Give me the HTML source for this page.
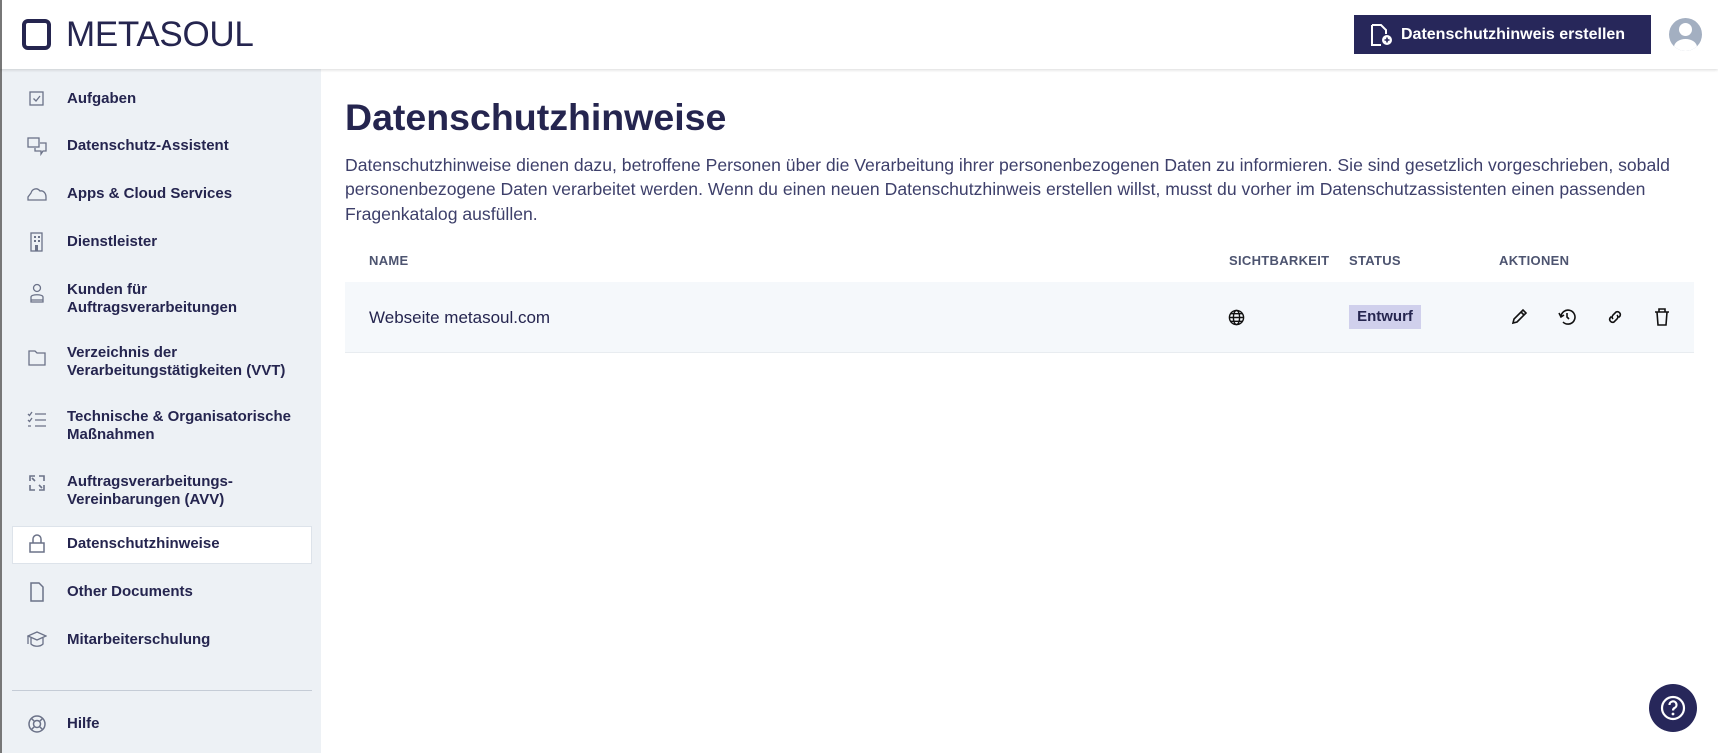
<!DOCTYPE html>
<html><head><meta charset="utf-8"><style>
*{margin:0;padding:0;box-sizing:border-box}
body{width:1718px;height:753px;overflow:hidden;background:#fff;font-family:"Liberation Sans",sans-serif;color:#25254f;position:relative}
.hdr{position:absolute;left:0;top:0;width:1718px;height:69px;background:#fff;box-shadow:0 1px 3px rgba(0,0,0,.15);z-index:2;border-left:2px solid #777}
.logo{position:absolute;left:20px;top:19px;width:29px;height:31px;border:4px solid #25254f;border-radius:6px}
.logotxt{position:absolute;left:64px;top:15px;font-size:35px;color:#25254f;letter-spacing:-0.3px}
.btn{position:absolute;left:1352px;top:15px;width:297px;height:39px;background:#27275a;color:#fff;font-weight:bold;font-size:16px;line-height:39px;padding-left:47px}
.btn svg{position:absolute;left:16px;top:9px}
.av{position:absolute;left:1667px;top:18px;width:33px;height:33px;border-radius:50%;background:#a3afc1;overflow:hidden}
.side{position:absolute;left:0;top:69px;width:321px;height:684px;background:#edf1f5;border-left:2px solid #777}
.it{position:absolute;left:65px;font-size:15px;font-weight:bold;line-height:17.5px;color:#25254f}
.ic{position:absolute;left:25px;width:20px;height:20px}
.act{position:absolute;left:10px;top:457px;width:300px;height:38px;background:#fff;border:1px solid #dde3ea}
.div{position:absolute;left:10px;top:621px;width:300px;height:1px;background:#c5ccd6}
h1{position:absolute;left:345px;top:96px;font-size:37.5px;font-weight:bold;color:#25254f}
.p{position:absolute;left:345px;top:153px;width:1660px;font-size:17.6px;line-height:24.3px;color:#3d3f6a;white-space:nowrap}
.th{position:absolute;top:253px;font-size:13px;font-weight:bold;color:#4d5470;letter-spacing:.3px}
.row{position:absolute;left:345px;top:282px;width:1349px;height:71px;background:#f5f8fb;border-bottom:1px solid #e8ecf0}
.badge{position:absolute;left:1349px;top:305px;width:72px;height:24px;background:#d0d0ec;font-weight:bold;font-size:15px;text-align:center;line-height:24px;color:#25254f}
.help{position:absolute;left:1649px;top:684px;width:48px;height:48px;border-radius:50%;background:#27275a}
</style></head><body>
<div class="hdr">
 <div class="logo"></div><div class="logotxt">METASOUL</div>
 <div class="btn"><svg width="24" height="22" viewBox="0 0 24 22"><path d="M2 1h9l5 5v4M2 1v20h9" fill="none" stroke="#fff" stroke-width="2"/><circle cx="17" cy="16" r="5" fill="#fff"/><path d="M17 13.5v5M14.5 16h5" stroke="#27275a" stroke-width="1.6"/></svg>Datenschutzhinweis erstellen</div>
 <div class="av"><div style="position:absolute;left:10px;top:5px;width:13px;height:13px;border-radius:50%;background:#fff"></div><div style="position:absolute;left:5px;top:21px;width:23px;height:16px;border-radius:50%;background:#fff"></div></div>
</div>
<div class="side">
 <div class="act"></div>
 <svg class="ic" style="top:20px" viewBox="0 0 20 20"><rect x="3" y="3" width="13" height="13" fill="none" stroke="#6b7288" stroke-width="1.3"/><path d="M6.5 9.5l2.5 2.5 4-5" fill="none" stroke="#6b7288" stroke-width="1.3"/></svg>
 <div class="it" style="top:21px">Aufgaben</div>
 <svg class="ic" style="top:67px" viewBox="0 0 20 20"><rect x="1" y="2" width="11" height="9" fill="none" stroke="#6b7288" stroke-width="1.3"/><path d="M13 7h6v8h-3l-2 3v-3H8v-3" fill="none" stroke="#6b7288" stroke-width="1.3"/></svg>
 <div class="it" style="top:68px">Datenschutz-Assistent</div>
 <svg class="ic" style="top:115px" viewBox="0 0 20 20"><path d="M1 16v-3l3-4c1-4 6-6 9-2 3-1 6 2 6 6v3z" fill="none" stroke="#6b7288" stroke-width="1.3"/></svg>
 <div class="it" style="top:116px">Apps &amp; Cloud Services</div>
 <svg class="ic" style="top:163px" viewBox="0 0 20 20"><rect x="4" y="1" width="11" height="18" fill="none" stroke="#6b7288" stroke-width="1.3"/><path d="M7 4h2v2H7zM11 4h2v2h-2zM7 8h2v2H7zM11 8h2v2h-2zM8 13h3v6H8z" fill="#6b7288"/></svg>
 <div class="it" style="top:164px">Dienstleister</div>
 <svg class="ic" style="top:214px" viewBox="0 0 20 20"><circle cx="10" cy="5" r="3.5" fill="none" stroke="#6b7288" stroke-width="1.3"/><path d="M4 19v-5c0-3 12-3 12 0v5zM4 17h12" fill="none" stroke="#6b7288" stroke-width="1.3"/></svg>
 <div class="it" style="top:212px">Kunden für<br>Auftragsverarbeitungen</div>
 <svg class="ic" style="top:279px" viewBox="0 0 20 20"><path d="M2 3h6l2 2h8v12H2z" fill="none" stroke="#6b7288" stroke-width="1.3"/></svg>
 <div class="it" style="top:275px">Verzeichnis der<br>Verarbeitungstätigkeiten (VVT)</div>
 <svg class="ic" style="top:341px" viewBox="0 0 20 20"><path d="M8 4h11M8 10h11M8 16h11M1 4l1.5 1.5L5 2M1 10l1.5 1.5L5 8M1 16h3" fill="none" stroke="#6b7288" stroke-width="1.3"/></svg>
 <div class="it" style="top:339px">Technische &amp; Organisatorische<br>Maßnahmen</div>
 <svg class="ic" style="top:404px" viewBox="0 0 20 20"><path d="M3 8V3h5M17 8V3h-5M3 12v5h5M17 12v5h-5M5 5l3 3M15 15l-3-3" fill="none" stroke="#6b7288" stroke-width="1.6"/></svg>
 <div class="it" style="top:404px">Auftragsverarbeitungs-<br>Vereinbarungen (AVV)</div>
 <svg class="ic" style="top:465px" viewBox="0 0 20 20"><path d="M6 9V5a4 4 0 0 1 8 0v4" fill="none" stroke="#6b7288" stroke-width="1.5"/><rect x="3" y="9" width="14" height="9" fill="none" stroke="#6b7288" stroke-width="1.5"/></svg>
 <div class="it" style="top:466px">Datenschutzhinweise</div>
 <svg class="ic" style="top:513px" viewBox="0 0 20 20"><path d="M4 1h8l4 4v14H4z" fill="none" stroke="#6b7288" stroke-width="1.5"/></svg>
 <div class="it" style="top:514px">Other Documents</div>
 <svg class="ic" style="top:561px" viewBox="0 0 20 20"><path d="M1 6l9-4 9 4-9 4zM4 8v6c3 3 9 3 12 0V8M1 6v8" fill="none" stroke="#6b7288" stroke-width="1.3"/></svg>
 <div class="it" style="top:562px">Mitarbeiterschulung</div>
 <div class="div"></div>
 <svg class="ic" style="top:645px" viewBox="0 0 20 20"><circle cx="10" cy="10" r="8" fill="none" stroke="#6b7288" stroke-width="1.5"/><circle cx="10" cy="10" r="3.5" fill="none" stroke="#6b7288" stroke-width="1.5"/><path d="M4 4l3.5 3.5M16 4l-3.5 3.5M4 16l3.5-3.5M16 16l-3.5-3.5" stroke="#6b7288" stroke-width="1.5"/></svg>
 <div class="it" style="top:646px">Hilfe</div>
</div>
<h1>Datenschutzhinweise</h1>
<div class="p">Datenschutzhinweise dienen dazu, betroffene Personen über die Verarbeitung ihrer personenbezogenen Daten zu informieren. Sie sind gesetzlich vorgeschrieben, sobald<br>personenbezogene Daten verarbeitet werden. Wenn du einen neuen Datenschutzhinweis erstellen willst, musst du vorher im Datenschutzassistenten einen passenden<br>Fragenkatalog ausfüllen.</div>
<div class="th" style="left:369px">NAME</div>
<div class="th" style="left:1229px">SICHTBARKEIT</div>
<div class="th" style="left:1349px">STATUS</div>
<div class="th" style="left:1499px">AKTIONEN</div>
<div class="row"></div>
<div style="position:absolute;left:369px;top:308px;font-size:17px;color:#25254f">Webseite metasoul.com</div>
<svg style="position:absolute;left:1228px;top:309px" width="17" height="17" viewBox="0 0 18 18"><g fill="none" stroke="#111" stroke-width="1.5"><circle cx="9" cy="9" r="7.5"/><ellipse cx="9" cy="9" rx="3.3" ry="7.5"/><path d="M1.5 9h15M3 5h12M3 13h12"/></g></svg>
<div class="badge">Entwurf</div>
<svg style="position:absolute;left:1510px;top:308px" width="18" height="18" viewBox="0 0 18 18"><path d="M3 15l1-4 9-9 3 3-9 9zM11 4l3 3" fill="none" stroke="#111" stroke-width="1.6"/></svg>
<svg style="position:absolute;left:1558px;top:308px" width="18" height="18" viewBox="0 0 18 18"><path d="M3 9a7 7 0 1 1 2 5M1 5l2 4 3-2M9 5v4l2 2" fill="none" stroke="#111" stroke-width="1.6"/></svg>
<svg style="position:absolute;left:1605px;top:308px" width="20" height="18" viewBox="0 0 20 18"><path d="M8 11a3 3 0 0 1 0-4l3-3a3 3 0 0 1 4 4l-1.5 1.5M12 7a3 3 0 0 1 0 4l-3 3a3 3 0 0 1-4-4l1.5-1.5" fill="none" stroke="#111" stroke-width="1.6"/></svg>
<svg style="position:absolute;left:1654px;top:308px" width="16" height="18" viewBox="0 0 16 18"><path d="M1 4h14M5 4V1h6v3M3 4l1 13h8l1-13" fill="none" stroke="#111" stroke-width="1.6"/></svg>
<div class="help"><svg width="48" height="48" viewBox="0 0 48 48"><circle cx="24" cy="24" r="11" fill="none" stroke="#fff" stroke-width="2.2"/><path d="M20.5 21a3.5 3.5 0 1 1 5 3c-1 .6-1.5 1.2-1.5 2.5" fill="none" stroke="#fff" stroke-width="2.2"/><circle cx="24" cy="30" r="1.4" fill="#fff"/></svg></div>
</body></html>
